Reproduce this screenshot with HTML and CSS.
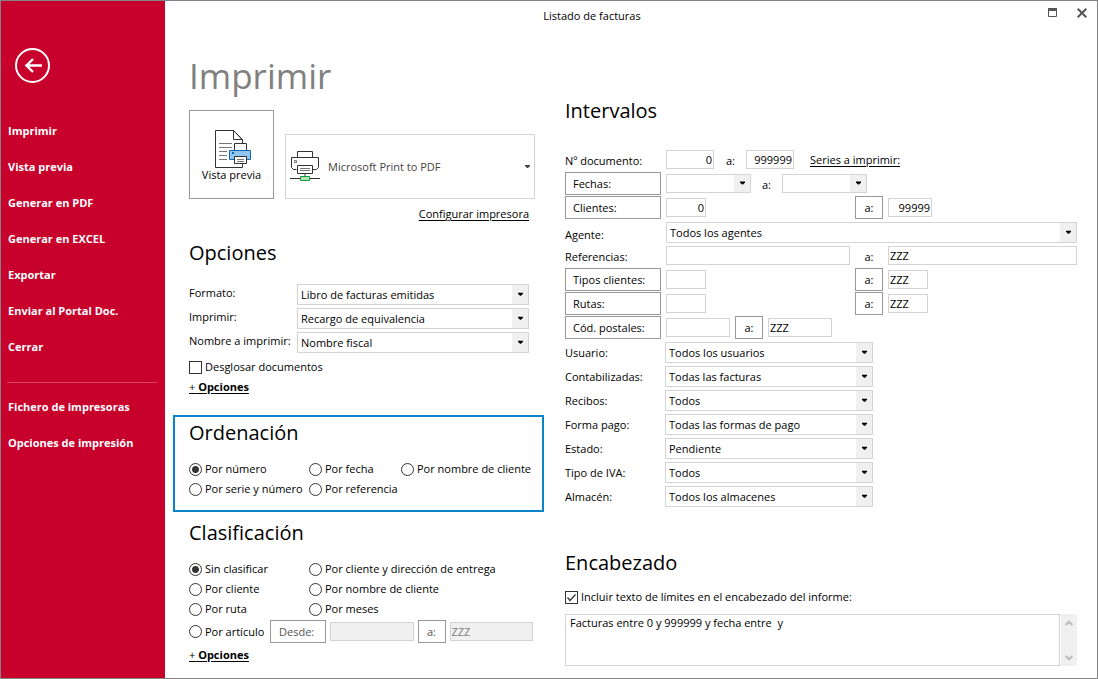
FILE: index.html
```html
<!DOCTYPE html>
<html lang="es">
<head>
<meta charset="utf-8">
<title>Listado de facturas</title>
<link rel="stylesheet" href="styles.css">
</head>
<body>
<div class="window">
  <nav class="sidebar">
    <button class="back" aria-label="Volver">
      <svg width="35" height="35" viewBox="0 0 35 35" fill="none" stroke="#fff"><circle cx="17.5" cy="17.5" r="16.5" stroke-width="2"/><path d="M27 17.500H10.500M18 11L11.500 17.500L18 24" stroke-width="2.400"/></svg>
    </button>
    <a class="nav-item" href="#">Imprimir</a>
    <a class="nav-item" href="#">Vista previa</a>
    <a class="nav-item" href="#">Generar en PDF</a>
    <a class="nav-item" href="#">Generar en EXCEL</a>
    <a class="nav-item" href="#">Exportar</a>
    <a class="nav-item" href="#">Enviar al Portal Doc.</a>
    <a class="nav-item" href="#">Cerrar</a>
    <hr class="nav-line">
    <a class="nav-item" href="#">Fichero de impresoras</a>
    <a class="nav-item" href="#">Opciones de impresión</a>
  </nav>

  <div class="main">
    <header class="titlebar">
      <span class="titlebar-text">Listado de facturas</span>
      <div class="titlebar-controls">
        <button class="win-button" aria-label="Maximizar"><svg width="10" height="10" viewBox="0 0 10 10"><path d="M.5 1.500H8.500V8.500H.5Z" fill="none" stroke="#555"/><path d="M0 0H9V3H0Z" fill="#555"/></svg></button>
        <button class="win-button" aria-label="Cerrar"><svg width="10" height="10" viewBox="0 0 10 10"><path d="M.7.7L9.300 9.300M9.300.7L.7 9.300" stroke="#555" stroke-width="2"/></svg></button>
      </div>
    </header>

    <div class="columns">
      <div class="left">
        <h1 class="page-title">Imprimir</h1>
        <div class="print-row">
          <button class="preview">
            <svg width="38" height="39" viewBox="0 0 38 39" fill="none">
              <path d="M28.500 13V10L19.500 .5H1.500V37.500H28.500V34" fill="#fff" stroke="#333"/>
              <path d="M19.500 .5V9.500H28.500M20 1L28.500 9.500" stroke="#333"/>
              <path d="M5 13.500H18M5 17.500H18M5 21.500H13M5 25.500H13M5 29.500H13" stroke="#777"/>
              <path d="M20.500 20V13.500H32.500V20" fill="#fff" stroke="#333"/>
              <path d="M15.500 20.500H36.500V29.500H15.500Z" fill="#92c6ee" stroke="#0f68b5"/>
              <path d="M18 22H20V24H18Z" fill="#0f68b5"/>
              <path d="M20.500 26.500H32.500V33.500H20.500Z" fill="#fff" stroke="#333"/>
              <path d="M23 29.500H30M23 31.500H30" stroke="#777"/>
            </svg>
            <span>Vista previa</span>
          </button>
          <div class="printer">
            <svg width="30" height="32" viewBox="0 0 30 32" fill="none">
              <path d="M7.500 7V.5H22.500V7" fill="#fff" stroke="#333"/>
              <path d="M6.500 18.500H3.500L1.500 16.500V6.500H28.500V16.500L26.500 18.500H23" fill="#fff" stroke="#333"/>
              <path d="M4.500 9.500H6.500V11.500H4.500Z" stroke="#777"/>
              <path d="M7.500 14.500H22.500V22.500H7.500Z" fill="#fff" stroke="#333"/>
              <path d="M10 17.500H20M10 19.500H20" stroke="#777"/>
              <path d="M15 23V25" stroke="#999" stroke-width="2"/>
              <path d="M0 27.500H30" stroke="#333"/>
              <path d="M10.500 25.500H19.500V29.500H10.500Z" fill="#b5dfb9" stroke="#109d3d"/>
            </svg>
            <select class="printer-select" aria-label="Impresora"><option>Microsoft Print to PDF</option></select>
          </div>
        </div>
        <a class="link configure" href="#">Configurar impresora</a>

        <section>
          <h2 class="heading options-heading">Opciones</h2>
          <div class="options">
            <label for="formato">Formato:</label>
            <select class="combo" id="formato"><option>Libro de facturas emitidas</option></select>
            <label for="imprimir">Imprimir:</label>
            <select class="combo" id="imprimir"><option>Recargo de equivalencia</option></select>
            <label for="nombre">Nombre a imprimir:</label>
            <select class="combo" id="nombre"><option>Nombre fiscal</option></select>
          </div>
          <label class="choice"><input class="check" type="checkbox">Desglosar documentos</label>
          <a class="link more" href="#"><span class="plus">+</span> Opciones</a>
        </section>

        <section class="highlight">
          <h2 class="heading choices-heading">Ordenación</h2>
          <div class="order-grid">
            <label class="choice"><input class="radio" type="radio" name="orden" checked>Por número</label>
            <label class="choice"><input class="radio" type="radio" name="orden">Por fecha</label>
            <label class="choice"><input class="radio" type="radio" name="orden">Por nombre de cliente</label>
            <label class="choice"><input class="radio" type="radio" name="orden">Por serie y número</label>
            <label class="choice"><input class="radio" type="radio" name="orden">Por referencia</label>
          </div>
        </section>

        <section class="classify">
          <h2 class="heading choices-heading">Clasificación</h2>
          <div class="classify-grid">
            <label class="choice"><input class="radio" type="radio" name="clase" checked>Sin clasificar</label>
            <label class="choice"><input class="radio" type="radio" name="clase">Por cliente y dirección de entrega</label>
            <label class="choice"><input class="radio" type="radio" name="clase">Por cliente</label>
            <label class="choice"><input class="radio" type="radio" name="clase">Por nombre de cliente</label>
            <label class="choice"><input class="radio" type="radio" name="clase">Por ruta</label>
            <label class="choice"><input class="radio" type="radio" name="clase">Por meses</label>
          </div>
          <div class="article-row">
            <label class="choice article"><input class="radio" type="radio" name="clase">Por artículo</label>
            <button class="pick pick-from" disabled>Desde:</button>
            <input class="field grow" type="text" aria-label="Artículo desde" disabled>
            <button class="pick pick-a" disabled>a:</button>
            <input class="field grow" type="text" aria-label="Artículo hasta" value="ZZZ" disabled>
          </div>
          <a class="link more" href="#"><span class="plus">+</span> Opciones</a>
        </section>
      </div>

      <div class="right">
        <section>
          <h2 class="heading ranges-heading">Intervalos</h2>
          <div class="row">
            <label class="row-label" for="doc1">Nº documento:</label>
            <input class="field num w48" id="doc1" type="text" value="0">
            <label class="to" for="doc2">a:</label>
            <input class="field num w48" id="doc2" type="text" value="999999">
            <a class="link series" href="#">Series a imprimir:</a>
          </div>
          <div class="row">
            <button class="pick pick-label">Fechas:</button>
            <select class="combo date" aria-label="Fecha desde"><option></option></select>
            <label class="to to-date" for="fecha2">a:</label>
            <select class="combo date" id="fecha2"><option></option></select>
          </div>
          <div class="row split">
            <button class="pick pick-label">Clientes:</button>
            <div class="start"><input class="field num w40" type="text" value="0" aria-label="Cliente desde"></div>
            <button class="pick pick-a">a:</button>
            <div class="end"><input class="field num w44" type="text" value="99999" aria-label="Cliente hasta"></div>
          </div>
          <div class="row">
            <label class="row-label lower" for="agente">Agente:</label>
            <select class="combo grow" id="agente"><option>Todos los agentes</option></select>
          </div>
          <div class="row split">
            <label class="row-label" for="ref1">Referencias:</label>
            <div class="start"><input class="field full" id="ref1" type="text"></div>
            <label class="to-plain" for="ref2">a:</label>
            <div class="end"><input class="field full" id="ref2" type="text" value="ZZZ"></div>
          </div>
          <div class="row split">
            <button class="pick pick-label">Tipos clientes:</button>
            <div class="start"><input class="field w40" type="text" aria-label="Tipo desde"></div>
            <button class="pick pick-a">a:</button>
            <div class="end"><input class="field w40" type="text" value="ZZZ" aria-label="Tipo hasta"></div>
          </div>
          <div class="row split">
            <button class="pick pick-label">Rutas:</button>
            <div class="start"><input class="field w40" type="text" aria-label="Ruta desde"></div>
            <button class="pick pick-a">a:</button>
            <div class="end"><input class="field w40" type="text" value="ZZZ" aria-label="Ruta hasta"></div>
          </div>
          <div class="row">
            <button class="pick pick-label">Cód. postales:</button>
            <input class="field w64" type="text" aria-label="Código postal desde">
            <button class="pick pick-a">a:</button>
            <input class="field w64" type="text" value="ZZZ" aria-label="Código postal hasta">
          </div>
          <div class="row filter"><label class="row-label" for="usuario">Usuario:</label><select class="combo wide" id="usuario"><option>Todos los usuarios</option></select></div>
          <div class="row filter"><label class="row-label" for="contab">Contabilizadas:</label><select class="combo wide" id="contab"><option>Todas las facturas</option></select></div>
          <div class="row filter"><label class="row-label" for="recibos">Recibos:</label><select class="combo wide" id="recibos"><option>Todos</option></select></div>
          <div class="row filter"><label class="row-label" for="pago">Forma pago:</label><select class="combo wide" id="pago"><option>Todas las formas de pago</option></select></div>
          <div class="row filter"><label class="row-label" for="estado">Estado:</label><select class="combo wide" id="estado"><option>Pendiente</option></select></div>
          <div class="row filter"><label class="row-label" for="iva">Tipo de IVA:</label><select class="combo wide" id="iva"><option>Todos</option></select></div>
          <div class="row filter"><label class="row-label" for="almacen">Almacén:</label><select class="combo wide" id="almacen"><option>Todos los almacenes</option></select></div>
        </section>

        <section class="header-section">
          <h2 class="heading header-heading">Encabezado</h2>
          <label class="choice"><input class="check" type="checkbox" checked>Incluir texto de límites en el encabezado del informe:</label>
          <div class="memo">
            <textarea class="memo-text" aria-label="Texto del encabezado">Facturas entre 0 y 999999 y fecha entre  y</textarea>
            <div class="scroll">
              <button class="scroll-button" aria-label="Subir"><svg width="8" height="6" viewBox="0 0 8 6" fill="none" stroke="#bcbcbc" stroke-width="2"><path d="M.7 5L4 1.700L7.300 5"/></svg></button>
              <button class="scroll-button" aria-label="Bajar"><svg width="8" height="6" viewBox="0 0 8 6" fill="none" stroke="#bcbcbc" stroke-width="2"><path d="M.7 1L4 4.300L7.300 1"/></svg></button>
            </div>
          </div>
        </section>
      </div>
    </div>
  </div>
</div>
</body>
</html>
```
FILE: styles.css
```css
* { box-sizing: border-box; }

body {
  margin: 0;
  background: #fff;
  color: #000;
  font: 11px/20px "Open Sans", "Noto Sans", sans-serif;
}

button, input, select, textarea {
  margin: 0;
  font: inherit;
  color: inherit;
  border-radius: 0;
}

button {
  padding: 0;
  border: 0;
  background: none;
}

svg { display: block; }

.window {
  display: flex;
  min-height: 100vh;
  border: 1px solid #848484;
}

/* Sidebar */
.sidebar {
  display: flex;
  flex-direction: column;
  flex: none;
  width: 164px;
  padding-top: 47px;
  background: #c8002c;
  color: #fff;
}

.back {
  align-self: flex-start;
  margin: 0 0 30px 14px;
}

.nav-item {
  padding-left: 7px;
  color: #fff;
  font-weight: 700;
  line-height: 36px;
  text-decoration: none;
}

.nav-line {
  width: 150px;
  height: 1px;
  margin: 17px 0 6px 6px;
  border: 0;
  background: #d64562;
}

/* Title bar */
.main {
  display: flex;
  flex-direction: column;
  flex: 1;
  min-width: 0;
}

.titlebar {
  display: flex;
  height: 30px;
}

.titlebar-text {
  flex: 1;
  line-height: 30px;
  text-align: center;
}

.titlebar-controls {
  display: flex;
  justify-content: flex-end;
  align-items: center;
  gap: 19px;
  width: 78px;
  padding: 0 10px 7px 0;
}

/* Content */
.columns {
  display: grid;
  grid-template-columns: 355px minmax(0, 1fr);
  gap: 21px;
  padding: 15px 20px 12px 24px;
}

.page-title {
  margin: 0 0 4px;
  color: #808080;
  font-size: 35px;
  font-weight: 400;
  line-height: 60px;
}

.heading {
  margin: 0;
  font-size: 20px;
  font-weight: 400;
  line-height: 28px;
}

.link {
  color: #000;
  text-decoration: underline;
  text-underline-offset: 2px;
}

.print-row {
  display: flex;
  align-items: flex-end;
  gap: 11px;
  width: 346px;
}

.preview {
  display: flex;
  flex-direction: column;
  align-items: center;
  width: 85px;
  height: 89px;
  padding-top: 19px;
  border: 1px solid #999;
  line-height: 12px;
}

.preview svg { margin-left: 3px; }

.printer {
  display: flex;
  flex: 1;
  align-items: center;
  height: 65px;
  padding-left: 4px;
  border: 1px solid #d4d4d4;
}

.printer-select {
  flex: 1;
  height: 63px;
  padding: 0 8px;
  border: 0;
  appearance: none;
  background: url("data:image/svg+xml,%3Csvg xmlns='http://www.w3.org/2000/svg' width='5' height='3'%3E%3Cpath d='M0 0H5V1L3 3H2L0 1Z' fill='%23444'/%3E%3C/svg%3E") right 4px center no-repeat;
  color: #444;
}

.configure {
  display: block;
  width: 340px;
  margin-top: 5px;
  text-align: right;
}

.options-heading { margin: 15px 0 17px; }

.options {
  display: grid;
  grid-template-columns: 108px 232px;
  row-gap: 3px;
  margin-bottom: 4px;
  line-height: 18px;
}

.combo {
  height: 21px;
  padding: 0 28px 0 3px;
  border: 1px solid #d4d4d4;
  appearance: none;
  background:
    url("data:image/svg+xml,%3Csvg xmlns='http://www.w3.org/2000/svg' width='16' height='20'%3E%3Cpath d='M0 0H16V20H0Z' fill='%23f0f0f0'/%3E%3Cpath d='M6 8H11V9L9 11H8L6 9Z'/%3E%3C/svg%3E") right center no-repeat #fff;
  line-height: 19px;
}

.choice {
  display: flex;
  align-items: center;
  gap: 3px;
  height: 20px;
  white-space: nowrap;
}

.check, .radio {
  flex: none;
  width: 13px;
  height: 13px;
  border: 1px solid #333;
  appearance: none;
  background: #fff;
}

.radio { border-radius: 50%; }

.radio:checked { background: radial-gradient(circle, #333 3px, transparent 4px) #fff; }

.check:checked {
  background: url("data:image/svg+xml,%3Csvg xmlns='http://www.w3.org/2000/svg' width='11' height='11'%3E%3Cpath d='M1.500 5.500L4 8.500L9.500 2.500' fill='none' stroke='%23333' stroke-width='1.300'/%3E%3C/svg%3E") center no-repeat #fff;
}

.more {
  display: table;
  font-weight: 700;
}

.plus { font-weight: 400; }

.highlight {
  margin: 18px 0 0 -16px;
  padding: 2px 0 11px 14px;
  border: 2px solid #0a84c8;
}

.choices-heading { margin-bottom: 12px; }

.order-grid {
  display: grid;
  grid-template-columns: 120px 92px 1fr;
}

.classify { margin-top: 7px; }

.classify-grid {
  display: grid;
  grid-template-columns: 120px 1fr;
}

.article-row {
  display: flex;
  align-items: center;
  gap: 4px;
  width: 344px;
  height: 25px;
  margin-bottom: 1px;
}

.article { width: 77px; }

.pick {
  flex: none;
  height: 23px;
  border: 1px solid #999;
  line-height: 21px;
}

.pick:disabled { color: #555; }

.pick-from {
  width: 56px;
  padding-left: 8px;
  text-align: left;
}

.pick-a { width: 28px; }

.field {
  height: 19px;
  min-width: 0;
  padding: 0 1px;
  border: 1px solid #d4d4d4;
  background: #fff;
  line-height: 17px;
}

.field:disabled {
  background: #f0f0f0;
  color: #808080;
}

.grow { flex: 1; }
.num { text-align: right; }
.w40 { width: 40px; }
.w44 { width: 44px; }
.w48 { width: 48px; }
.w64 { width: 64px; }
.full { width: 100%; }

/* Ranges */
.ranges-heading { margin: 51px 0 23px; }

.row {
  display: flex;
  gap: 5px;
  height: 24px;
}

.row.filter { gap: 4px; }

.row .field, .row .combo { margin-top: 2px; }

.row-label, .pick-label {
  flex: none;
  width: 96px;
}

.row-label, .to, .to-plain, .series { line-height: 26px; }

.row-label.lower { line-height: 30px; }

.pick-label {
  padding-left: 7px;
  text-align: left;
}

.to {
  width: 22px;
  padding-left: 7px;
}

.to-date {
  width: 21px;
  padding-left: 6px;
}

.series {
  margin-left: 11px;
  line-height: 23px;
}

.row .date {
  width: 85px;
  height: 19px;
}

.split {
  display: grid;
  grid-template-columns: 96px minmax(0, 184px) 28px minmax(0, 1fr);
  column-gap: 5px;
}

.split .start { margin-right: -1px; padding-right: 1px; }

.split .pick-a { justify-self: end; }

.to-plain { text-align: center; }

.split .start, .split .end { display: flex; }

.wide { width: 208px; }

.header-section { margin-top: 41px; }

.header-heading { margin-bottom: 10px; }

.memo {
  display: flex;
  gap: 1px;
  margin-top: 7px;
}

.memo-text {
  flex: 1;
  height: 52px;
  padding: 0 4px;
  border: 1px solid #d4d4d4;
  outline: 0;
  resize: none;
  overflow: hidden;
  line-height: 16px;
}

.scroll {
  display: flex;
  flex-direction: column;
  justify-content: space-between;
  align-items: center;
  width: 16px;
  padding: 6px 0 5px;
  background: #f0f0f0;
}
```
